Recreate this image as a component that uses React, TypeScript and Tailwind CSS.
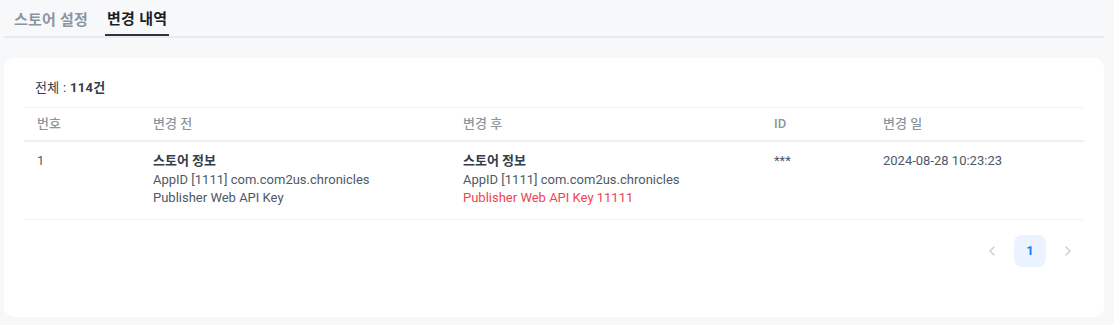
import React from 'react';

const rows = [
  {
    no: '1',
    before: { title: '스토어 정보', lines: ['AppID [1111] com.com2us.chronicles', 'Publisher Web API Key'] },
    after: { title: '스토어 정보', lines: ['AppID [1111] com.com2us.chronicles'], changed: 'Publisher Web API Key 11111' },
    id: '***',
    date: '2024-08-28 10:23:23',
  },
];

const cols = 'grid grid-cols-[116px_310px_311px_109px_1fr]';

function ChevronLeft() {
  return (
    <svg className="w-4 h-4" fill="none" stroke="currentColor" viewBox="0 0 24 24">
      <path strokeLinecap="round" strokeLinejoin="round" strokeWidth={2} d="M15 18l-6-6 6-6" />
    </svg>
  );
}

function ChevronRight() {
  return (
    <svg className="w-4 h-4" fill="none" stroke="currentColor" viewBox="0 0 24 24">
      <path strokeLinecap="round" strokeLinejoin="round" strokeWidth={2} d="M9 18l6-6-6-6" />
    </svg>
  );
}

export default function App() {
  return (
    <div
      className="h-[325px] bg-[#f7f8fa] pl-1 pr-[10px] text-[13px] text-[#333d4b]"
      style={{ fontFamily: 'Roboto, "Noto Sans CJK KR", sans-serif' }}
    >
      {/* Tabs */}
      <div className="flex gap-[15px] pl-[8px] border-b-2 border-[#e9eaee]">
        <button className="h-[36px] px-[2px] pt-[4px] text-[15px] tracking-[0.2px] font-bold text-[#8b95a1]">스토어 설정</button>
        <button className="h-[36px] px-[2px] pt-[4px] text-[15px] tracking-[0.3px] font-bold text-[#191f28] border-b-2 border-[#2d3340] -mb-[2px]">
          변경 내역
        </button>
      </div>

      {/* Card */}
      <div className="mt-5 h-[259px] bg-white rounded-[10px] px-5 pt-[21px]">
        <div className="pl-[11px] h-[18px] leading-[18px] tracking-[0.3px]">
          전체 : <span className="font-bold">114건</span>
        </div>

        <div className="mt-[10px] border-t border-[#f2f3f5]">
          <div className={`${cols} h-[34px] items-center text-[#8b95a1] font-medium border-b-2 border-[#eeeff2]`}>
            <div className="pl-[13px]">번호</div>
            <div className="pl-[13px]">변경 전</div>
            <div className="pl-[13px]">변경 후</div>
            <div className="pl-[13px]">ID</div>
            <div className="pl-[13px]">변경 일</div>
          </div>

          {rows.map((r) => (
            <div key={r.no} className={`${cols} pt-[10px] pb-[11px] leading-[18.5px] border-b border-[#f2f3f5]`}>
              <div className="pl-[13px] text-[#4e5968]">{r.no}</div>
              <div className="pl-[13px]">
                <div className="font-bold text-[#333d4b]">{r.before.title}</div>
                {r.before.lines.map((l) => (
                  <div key={l} className="text-[#4e5968]">{l}</div>
                ))}
              </div>
              <div className="pl-[13px]">
                <div className="font-bold text-[#333d4b]">{r.after.title}</div>
                {r.after.lines.map((l) => (
                  <div key={l} className="text-[#4e5968]">{l}</div>
                ))}
                <div className="text-[#f04452]">{r.after.changed}</div>
              </div>
              <div className="pl-[13px] text-[#4e5968]">{r.id}</div>
              <div className="pl-[13px] text-[#4e5968]">{r.date}</div>
            </div>
          ))}
        </div>

        {/* Pagination */}
        <div className="mt-[15px] flex justify-end items-center gap-1.5">
          <button className="w-8 h-8 flex items-center justify-center text-[#c9ccd2]">
            <ChevronLeft />
          </button>
          <button className="w-8 h-8 rounded-lg bg-[#eaf3ff] text-[#1b7bf5] font-bold">1</button>
          <button className="w-8 h-8 flex items-center justify-center text-[#c9ccd2]">
            <ChevronRight />
          </button>
        </div>
      </div>
    </div>
  );
}
